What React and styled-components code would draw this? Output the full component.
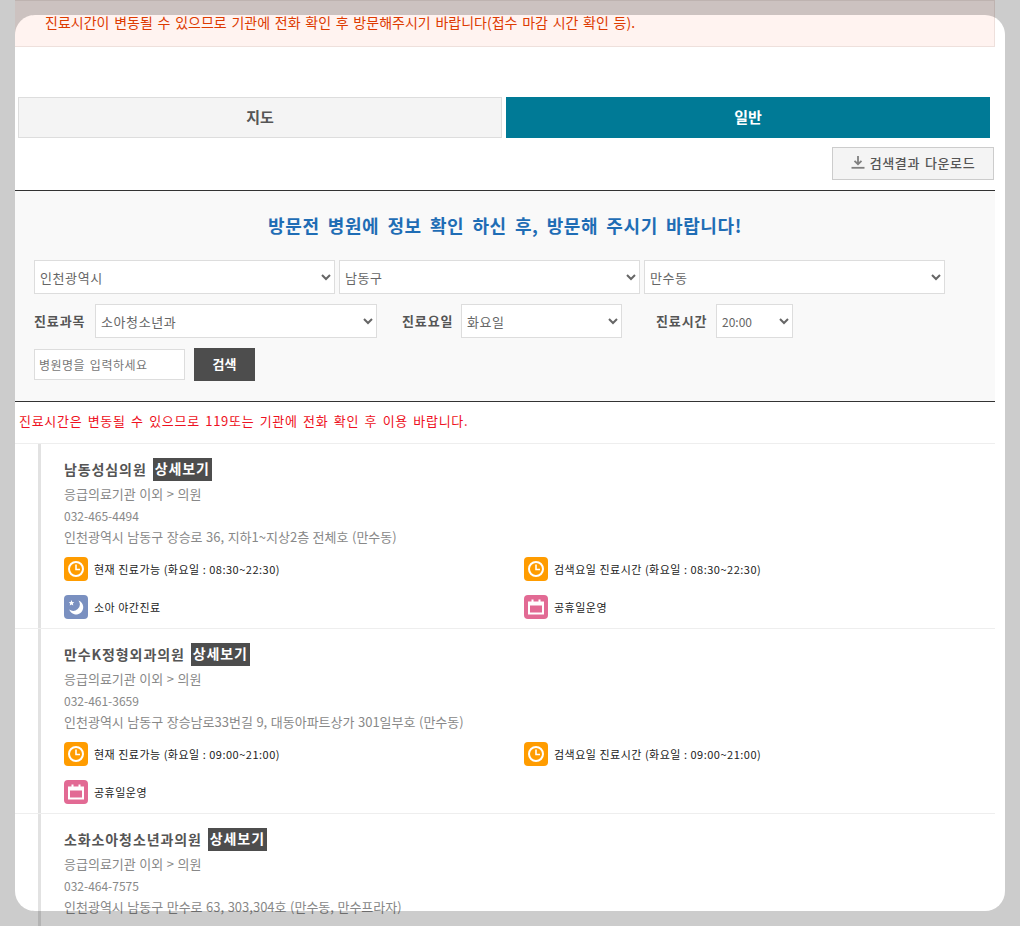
import React from 'react';
import styled, { createGlobalStyle } from 'styled-components';

const GlobalStyle = createGlobalStyle`
  html, body {
    margin: 0;
    padding: 0;
    background: #fff;
    overflow: hidden;
  }
  * {
    box-sizing: border-box;
  }
  body, select, input, button {
    font-family: "Noto Sans CJK KR", "Liberation Sans", sans-serif;
  }
`;

const Page = styled.div`
  width: 1020px;
  height: 926px;
  overflow: hidden;
  padding: 0 25px 0 15px;
`;

// 모달 바깥을 어둡게 덮는 레이어
const Mask = styled.div`
  position: fixed;
  top: 15px;
  left: 15px;
  right: 15px;
  bottom: 15px;
  border-radius: 20px;
  box-shadow: 0 0 0 1000px rgba(0, 0, 0, 0.2);
  pointer-events: none;
`;

const Notice = styled.div`
  height: 47px;
  padding: 0 0 3px 30px;
  display: flex;
  align-items: center;
  font-size: 14px;
  word-spacing: 1.6px;
  color: #dd3a00;
  background: #fff3f0;
  border: 1px solid #eee0dc;
  border-left: 0;
`;

const Tabs = styled.div`
  display: grid;
  grid-template-columns: 484px 484px;
  gap: 4px;
  margin: 50px 0 0 3px;
`;

const Tab = styled.div`
  height: 41px;
  padding-bottom: 3px;
  display: flex;
  align-items: center;
  justify-content: center;
  font-size: 15px;
  font-weight: 700;
  color: ${p => (p.$active ? '#fff' : '#555')};
  background: ${p => (p.$active ? '#007a96' : '#f4f4f4')};
  border: 1px solid ${p => (p.$active ? '#007a96' : '#ddd')};
`;

const DownloadRow = styled.div`
  display: flex;
  justify-content: flex-end;
  margin: 9px 1px 0 0;
  height: 43px;
`;

const DownloadButton = styled.button`
  width: 162px;
  height: 33px;
  padding: 0 0 3px;
  display: flex;
  align-items: center;
  justify-content: center;
  gap: 5px;
  font-size: 13px;
  font-weight: 500;
  letter-spacing: 0.6px;
  word-spacing: 1.5px;
  color: #555;
  background: #f4f4f4;
  border: 1px solid #ccc;
`;

const SearchPanel = styled.section`
  height: 212px;
  padding: 0 19px;
  background: #f9f9f9;
  border-top: 1px solid #333;
  border-bottom: 1px solid #333;
`;

const Title = styled.h2`
  margin: 0;
  padding-top: 21px;
  height: 69px;
  font-size: 18px;
  line-height: 26px;
  font-weight: 700;
  letter-spacing: 0.6px;
  word-spacing: 3.5px;
  color: #1f6db5;
  text-align: center;
`;

const Row = styled.div`
  display: flex;
  align-items: center;
  gap: ${p => p.$gap || 0}px;
  margin-bottom: ${p => p.$mb || 0}px;
`;

const Select = styled.select`
  width: ${p => p.$w}px;
  height: 34px;
  margin-right: ${p => p.$mr || 0}px;
  padding: 0 0 0 1px;
  font-size: 13px;
  letter-spacing: 0.6px;
  color: #666;
  background: #fff;
  border: 1px solid #ddd;
  border-radius: 0;
`;

const TimeSelect = styled(Select)`
  font-size: 12px;
  letter-spacing: 0;
`;

const FieldLabel = styled.label`
  width: ${p => p.$w}px;
  font-size: 13px;
  font-weight: 700;
  letter-spacing: 0.9px;
  color: #555;
  position: relative;
  top: -1px;
`;

const NameInput = styled.input`
  width: 151px;
  height: 31px;
  padding: 0 4px;
  font-size: 12px;
  letter-spacing: 0.5px;
  word-spacing: 1.5px;
  background: #fff;
  border: 1px solid #ddd;
  &::placeholder {
    color: #777;
  }
`;

const SearchButton = styled.button`
  width: 61px;
  height: 33px;
  margin-left: 9px;
  padding: 0 0 3px;
  font-size: 13px;
  font-weight: 700;
  color: #fff;
  background: #4d4d4d;
  border: 0;
`;

const Warning = styled.p`
  margin: 0;
  height: 41px;
  padding: 10px 0 0 4px;
  font-size: 13px;
  line-height: 18px;
  letter-spacing: 0.7px;
  word-spacing: 1.8px;
  color: #ee1122;
`;

const Item = styled.article`
  border-top: 1px solid #eee;
  padding-left: 23px;
`;

const ItemBody = styled.div`
  min-height: 184px;
  padding: 13px 0 0 23px;
  border-left: 3px solid #e2e2e2;
`;

const NameRow = styled.div`
  display: flex;
  align-items: center;
  gap: 6px;
  height: 24px;
  margin-bottom: 2px;
`;

const HospitalName = styled.strong`
  font-size: 14px;
  font-weight: 700;
  letter-spacing: 0.9px;
  color: #555;
`;

const DetailButton = styled.button`
  height: 23px;
  padding: 0 2px 2px;
  font-size: 14px;
  font-weight: 700;
  letter-spacing: 0.9px;
  color: #fff;
  background: #4d4d4d;
  border: 0;
`;

const InfoLine = styled.div`
  height: 21.5px;
  font-size: 13px;
  line-height: 21.5px;
  word-spacing: 0.6px;
  color: #888;
`;

const PhoneLine = styled(InfoLine)`
  font-size: 12px;
  word-spacing: 0;
`;

const Badges = styled.div`
  display: grid;
  grid-template-columns: 460px 460px;
  grid-auto-rows: 24px;
  row-gap: 14px;
  margin-top: 9px;
`;

const Badge = styled.div`
  display: flex;
  align-items: center;
  gap: 6px;
  font-size: 11px;
  letter-spacing: 0.5px;
  color: #222;
`;

const IconBox = styled.span`
  width: 24px;
  height: 24px;
  flex: none;
  display: flex;
  align-items: center;
  justify-content: center;
  border-radius: 4px;
  background: ${p => p.$color};
`;

const ClockIcon = () => (
  <IconBox $color="#ff9c00">
    <svg width="18" height="18" viewBox="0 0 18 18" fill="none" stroke="#fff" strokeWidth="2">
      <circle cx="9" cy="9" r="7" />
      <path d="M9 4.5V9.5H13" strokeWidth="1.6" />
    </svg>
  </IconBox>
);

const MoonIcon = () => (
  <IconBox $color="#7a90c0">
    <svg width="20" height="20" viewBox="0 0 20 20" fill="#fff">
      <path d="M12.5 3.5A7.2 7.2 0 1 1 3.2 12.6A6.6 6.6 0 0 0 12.5 3.5Z" />
      <path d="M5.5 3L6.3 5L8.3 5.2L6.8 6.5L7.3 8.5L5.5 7.4L3.7 8.5L4.2 6.5L2.7 5.2L4.7 5Z" />
    </svg>
  </IconBox>
);

const CalendarIcon = () => (
  <IconBox $color="#e26a94">
    <svg width="18" height="18" viewBox="0 0 18 18" fill="none" stroke="#fff" strokeWidth="2">
      <rect x="2" y="4.5" width="14" height="11" />
      <path d="M2 6H16" strokeWidth="3" />
      <path d="M5.5 1.5V4.5M12.5 1.5V4.5" />
    </svg>
  </IconBox>
);

const DownloadIcon = () => (
  <svg width="14" height="14" viewBox="0 0 14 14" fill="none" stroke="#808080" strokeWidth="1.8">
    <path d="M7 1V9M3.5 5.8L7 9.2L10.5 5.8" />
    <path d="M0.5 12.8H13.5" />
  </svg>
);

const hospitals = [
  {
    name: '남동성심의원',
    phone: '032-465-4494',
    address: '인천광역시 남동구 장승로 36, 지하1~지상2층 전체호 (만수동)',
    hours: '08:30~22:30',
    night: true,
    holiday: true,
  },
  {
    name: '만수K정형외과의원',
    phone: '032-461-3659',
    address: '인천광역시 남동구 장승남로33번길 9, 대동아파트상가 301일부호 (만수동)',
    hours: '09:00~21:00',
    holiday: true,
  },
  {
    name: '소화소아청소년과의원',
    phone: '032-464-7575',
    address: '인천광역시 남동구 만수로 63, 303,304호 (만수동, 만수프라자)',
  },
];

export default function App() {
  return (
    <Page>
      <GlobalStyle />
      <Notice>진료시간이 변동될 수 있으므로 기관에 전화 확인 후 방문해주시기 바랍니다(접수 마감 시간 확인 등).</Notice>

      <Tabs>
        <Tab>지도</Tab>
        <Tab $active>일반</Tab>
      </Tabs>

      <DownloadRow>
        <DownloadButton>
          <DownloadIcon />
          검색결과 다운로드
        </DownloadButton>
      </DownloadRow>

      <SearchPanel>
        <Title>방문전 병원에 정보 확인 하신 후, 방문해 주시기 바랍니다!</Title>
        <Row $gap={4} $mb={10}>
          <Select $w={301}><option>인천광역시</option></Select>
          <Select $w={301}><option>남동구</option></Select>
          <Select $w={301}><option>만수동</option></Select>
        </Row>
        <Row $mb={10}>
          <FieldLabel $w={61}>진료과목</FieldLabel>
          <Select $w={282} $mr={25}><option>소아청소년과</option></Select>
          <FieldLabel $w={59}>진료요일</FieldLabel>
          <Select $w={161} $mr={34}><option>화요일</option></Select>
          <FieldLabel $w={60}>진료시간</FieldLabel>
          <TimeSelect $w={77}><option>20:00</option></TimeSelect>
        </Row>
        <Row>
          <NameInput placeholder="병원명을 입력하세요" />
          <SearchButton>검색</SearchButton>
        </Row>
      </SearchPanel>

      <Warning>진료시간은 변동될 수 있으므로 119또는 기관에 전화 확인 후 이용 바랍니다.</Warning>

      {hospitals.map(h => (
        <Item key={h.name}>
          <ItemBody>
            <NameRow>
              <HospitalName>{h.name}</HospitalName>
              <DetailButton>상세보기</DetailButton>
            </NameRow>
            <InfoLine>응급의료기관 이외 &gt; 의원</InfoLine>
            <PhoneLine>{h.phone}</PhoneLine>
            <InfoLine>{h.address}</InfoLine>
            {h.hours && (
              <Badges>
                <Badge><ClockIcon />현재 진료가능 (화요일 : {h.hours})</Badge>
                <Badge><ClockIcon />검색요일 진료시간 (화요일 : {h.hours})</Badge>
                {h.night && <Badge><MoonIcon />소아 야간진료</Badge>}
                {h.holiday && <Badge><CalendarIcon />공휴일운영</Badge>}
              </Badges>
            )}
          </ItemBody>
        </Item>
      ))}

      <Mask />
    </Page>
  );
}
